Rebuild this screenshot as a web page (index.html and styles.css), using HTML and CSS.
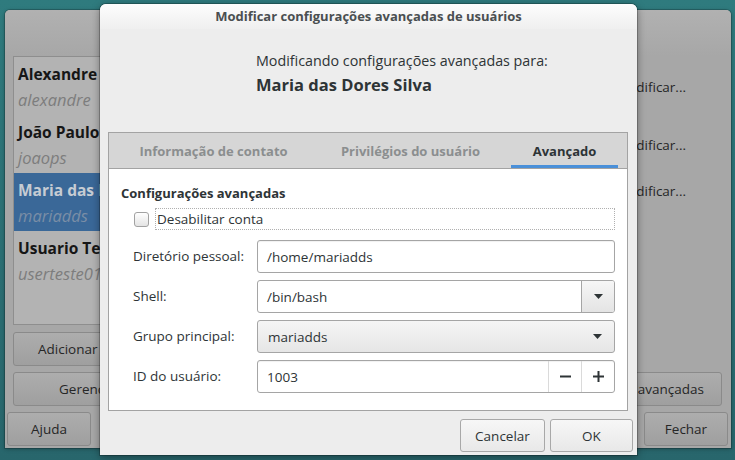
FILE: index.html
```html
<!DOCTYPE html>
<html lang="pt-BR">
<head>
<meta charset="utf-8">
<title>Modificar configurações avançadas de usuários</title>
<link rel="stylesheet" href="styles.css">
</head>
<body>
<div class="desktop">
  <div class="bgwin">
    <div class="bg-head"></div>
    <div class="bg-main">
      <div class="bg-left">
        <div class="userlist">
          <div class="urow"><div class="uname">Alexandre Souza</div><div class="ulogin">alexandre</div></div>
          <div class="urow"><div class="uname">João Paulo Santos</div><div class="ulogin">joaops</div></div>
          <div class="urow selected"><div class="uname">Maria das Dores Silva</div><div class="ulogin">mariadds</div></div>
          <div class="urow"><div class="uname">Usuario Teste</div><div class="ulogin">userteste01</div></div>
        </div>
        <button class="bgbtn btn-add">Adicionar</button>
      </div>
      <div class="bg-right">
        <span class="modlink l1">Modificar...</span>
        <span class="modlink l2">Modificar...</span>
        <span class="modlink l3">Modificar...</span>
      </div>
    </div>
    <div class="bg-row2">
      <button class="bgbtn btn-groups">Gerenciar</button>
      <button class="bgbtn btn-adv">avançadas</button>
    </div>
    <div class="bg-foot">
      <button class="bgbtn btn-foot">Ajuda</button>
      <button class="bgbtn btn-foot">Fechar</button>
    </div>
  </div>

  <div class="dialog">
    <div class="titlebar">Modificar configurações avançadas de usuários</div>
    <div class="dlg-head">
      <div class="head-sub">Modificando configurações avançadas para:</div>
      <div class="head-name">Maria das Dores Silva</div>
    </div>
    <div class="notebook">
      <div class="tabs">
        <div class="tab tab1">Informação de contato</div>
        <div class="tab tab2">Privilégios do usuário</div>
        <div class="tab tab3 active">Avançado</div>
      </div>
      <div class="page">
        <div class="section-title">Configurações avançadas</div>
        <div class="check-row">
          <span class="checkbox"></span>
          <span class="check-label">Desabilitar conta</span>
        </div>
        <div class="form">
          <div class="flabel">Diretório pessoal:</div>
          <div class="entry">/home/mariadds</div>

          <div class="flabel">Shell:</div>
          <div class="combo-entry">
            <span class="ce-text">/bin/bash</span>
            <span class="ce-btn"><svg width="9" height="5" viewBox="0 0 9 5"><path d="M0 0h9L4.5 5z" fill="#2e3436"/></svg></span>
          </div>

          <div class="flabel">Grupo principal:</div>
          <div class="combo-btn">
            <span class="cb-text">mariadds</span>
            <svg width="9" height="5" viewBox="0 0 9 5"><path d="M0 0h9L4.5 5z" fill="#2e3436"/></svg>
          </div>

          <div class="flabel">ID do usuário:</div>
          <div class="spin">
            <span class="spin-text">1003</span>
            <span class="spin-btn"><svg width="11" height="11" viewBox="0 0 11 11"><rect x="0" y="4.5" width="11" height="2" fill="#2e3436"/></svg></span>
            <span class="spin-btn"><svg width="11" height="11" viewBox="0 0 11 11"><rect x="0" y="4.5" width="11" height="2" fill="#2e3436"/><rect x="4.5" y="0" width="2" height="11" fill="#2e3436"/></svg></span>
          </div>
        </div>
      </div>
    </div>
    <div class="actions">
      <button class="dbtn btn-cancel">Cancelar</button>
      <button class="dbtn btn-ok">OK</button>
    </div>
  </div>
</div>
</body>
</html>
```

FILE: styles.css
```css
* { box-sizing: border-box; }
html, body { margin: 0; padding: 0; }
body {
  width: 735px;
  height: 460px;
  overflow: hidden;
  font-family: "Open Sans", "DejaVu Sans", sans-serif;
  font-size: 13.5px;
  color: #2e3436;
}
button { font-family: inherit; font-size: inherit; color: inherit; margin: 0; }

.desktop {
  position: relative;
  width: 735px;
  height: 460px;
  overflow: hidden;
  background: linear-gradient(180deg, #2f7b7e 0%, #2b6f74 55%, #28666c 100%);
}

/* ---------- background (parent) window ---------- */
.bgwin {
  position: absolute;
  left: 5px;
  top: 10px;
  width: 726px;
  height: 438px;
  background: #a7a7a7;
  border-radius: 5px 5px 0 0;
  box-shadow: 0 0 0 1px rgba(0, 0, 0, 0.18), 0 1px 4px rgba(0, 0, 0, 0.3);
  display: flex;
  flex-direction: column;
  color: #1c1c1c;
}
.bg-head {
  height: 46px;
  border-radius: 5px 5px 0 0;
  background: linear-gradient(180deg, #b1b1b1, #a7a7a7);
}
.bg-main {
  display: flex;
  height: 310px;
}
.bg-left {
  width: 102px;
  margin-left: 8px;
  display: flex;
  flex-direction: column;
  overflow: hidden;
}
.userlist {
  height: 269px;
  width: 102px;
  background: #b3b3b3;
  border: 1px solid #8e8e8e;
  overflow: hidden;
}
.urow {
  height: 58px;
  padding: 7px 0 0 4px;
  overflow: hidden;
}
.uname {
  font-weight: 700;
  font-size: 15.5px;
  line-height: 20px;
  color: #161616;
  white-space: nowrap;
}
.ulogin {
  font-style: italic;
  font-size: 16.5px;
  line-height: 20px;
  margin-top: 6px;
  color: #7d7d7d;
  white-space: nowrap;
}
.urow.selected {
  background: #3a6898;
}
.urow.selected .uname { color: #c6ccd3; }
.urow.selected .ulogin { color: #7a8ea6; }

.bgbtn {
  height: 34px;
  border: 1px solid #8a8a8a;
  border-radius: 3px;
  background: linear-gradient(180deg, #adadad, #9f9f9f);
  color: #262626;
  font-size: 13.5px;
  white-space: nowrap;
  padding: 0 12px;
  overflow: hidden;
}
.btn-add {
  margin-top: 7px;
  width: 110px;
  text-align: left;
  padding-left: 24px;
}
.bg-right {
  flex: 1;
  display: flex;
  flex-direction: column;
  padding-left: 501px;
  padding-top: 21px;
  color: #262626;
}
.modlink { line-height: 20px; height: 20px; white-space: nowrap; }
.modlink.l2 { margin-top: 38px; }
.modlink.l3 { margin-top: 26px; }

.bg-row2 {
  display: flex;
  justify-content: space-between;
  margin-top: 6px;
  padding: 0 9px 0 8px;
}
.btn-groups { width: 110px; text-align: left; padding-left: 45px; }
.btn-adv { width: 110px; text-align: right; padding-right: 17px; }
.bg-foot {
  display: flex;
  justify-content: space-between;
  margin-top: 6px;
  padding: 0 3px 0 2px;
}
.btn-foot { width: 84px; text-align: center; }

/* ---------- dialog ---------- */
.dialog {
  position: absolute;
  left: 100px;
  top: 4px;
  width: 537px;
  height: 451px;
  background: #ededed;
  border-radius: 6px 6px 0 0;
  box-shadow: 0 0 0 1px rgba(0, 0, 0, 0.22), 0 2px 9px rgba(0, 0, 0, 0.4);
  display: flex;
  flex-direction: column;
}
.titlebar {
  height: 25px;
  border-radius: 6px 6px 0 0;
  background: linear-gradient(180deg, #fdfdfd, #efefef);
  text-align: center;
  font-weight: 700;
  font-size: 13px;
  line-height: 25px;
  color: #4a4f51;
}
.dlg-head {
  padding: 22px 0 0 156px;
}
.head-sub {
  line-height: 20px;
  font-size: 14.3px;
  color: #2e3436;
}
.head-name {
  margin-top: 3px;
  line-height: 22px;
  font-size: 16.5px;
  font-weight: 700;
  color: #2e3436;
}
.notebook {
  margin: 36px 9px 0 8px;
  height: 279px;
  border: 1px solid #a3a3a3;
  display: flex;
  flex-direction: column;
}
.tabs {
  height: 36px;
  display: flex;
  background: #d6d6d6;
  border-bottom: 1px solid #a3a3a3;
}
.tab {
  font-weight: 700;
  font-size: 13px;
  color: #8b8e8f;
  text-align: center;
  line-height: 37px;
  white-space: nowrap;
}
.tab1 { width: 209px; }
.tab2 { width: 193px; padding-right: 8px; }
.tab3 { width: 107px; }
.tab.active {
  color: #2e3436;
  box-shadow: inset 0 -3px 0 #4a90d9;
}
.page {
  flex: 1;
  background: #ffffff;
  padding: 14px 12px 0 12px;
}
.section-title {
  font-weight: 700;
  font-size: 13px;
  line-height: 20px;
}
.check-row {
  margin-top: 5px;
  height: 22px;
  display: flex;
  align-items: center;
  padding-left: 13px;
}
.checkbox {
  width: 15px;
  height: 15px;
  border: 1px solid #a2a2a2;
  border-radius: 3px;
  background: linear-gradient(180deg, #ffffff, #e4e4e4);
  margin-right: 6px;
}
.check-label {
  flex: 1;
  height: 22px;
  line-height: 20px;
  border: 1px dotted #b0b0b0;
  padding-left: 1px;
}
.form {
  margin-top: 10px;
  display: grid;
  grid-template-columns: 124px 1fr;
  row-gap: 7px;
  padding-left: 12px;
}
.flabel {
  height: 33px;
  line-height: 33px;
  color: #2e3436;
}
.entry, .combo-entry, .combo-btn, .spin {
  height: 33px;
  border: 1px solid #a5a5a5;
  border-radius: 3px;
  display: flex;
  align-items: center;
}
.entry {
  background: #fff;
  padding-left: 9px;
  box-shadow: inset 0 1px 1px rgba(0, 0, 0, 0.06);
}
.combo-entry {
  background: #fff;
  overflow: hidden;
}
.ce-text {
  flex: 1;
  padding-left: 9px;
}
.ce-btn {
  width: 33px;
  align-self: stretch;
  border-left: 1px solid #a5a5a5;
  background: linear-gradient(180deg, #f6f6f6, #e4e4e4);
  display: flex;
  align-items: center;
  justify-content: center;
}
.combo-btn {
  background: linear-gradient(180deg, #f5f5f5, #e6e6e6);
  padding: 0 12px 0 10px;
}
.cb-text { flex: 1; }
.spin {
  background: #fff;
  overflow: hidden;
  box-shadow: inset 0 1px 1px rgba(0, 0, 0, 0.06);
}
.spin-text { flex: 1; padding-left: 9px; }
.spin-btn {
  width: 33px;
  align-self: stretch;
  border-left: 1px solid #dadada;
  display: flex;
  align-items: center;
  justify-content: center;
}
.actions {
  margin-top: 8px;
  display: flex;
  justify-content: flex-end;
  gap: 5px;
  padding-right: 4px;
}
.dbtn {
  height: 33px;
  border: 1px solid #a8a8a8;
  border-radius: 3px;
  background: linear-gradient(180deg, #f7f7f7, #e8e8e8);
  color: #2e3436;
  font-size: 13.5px;
  padding: 0;
}
.btn-cancel { width: 85px; }
.btn-ok { width: 83px; }
```
